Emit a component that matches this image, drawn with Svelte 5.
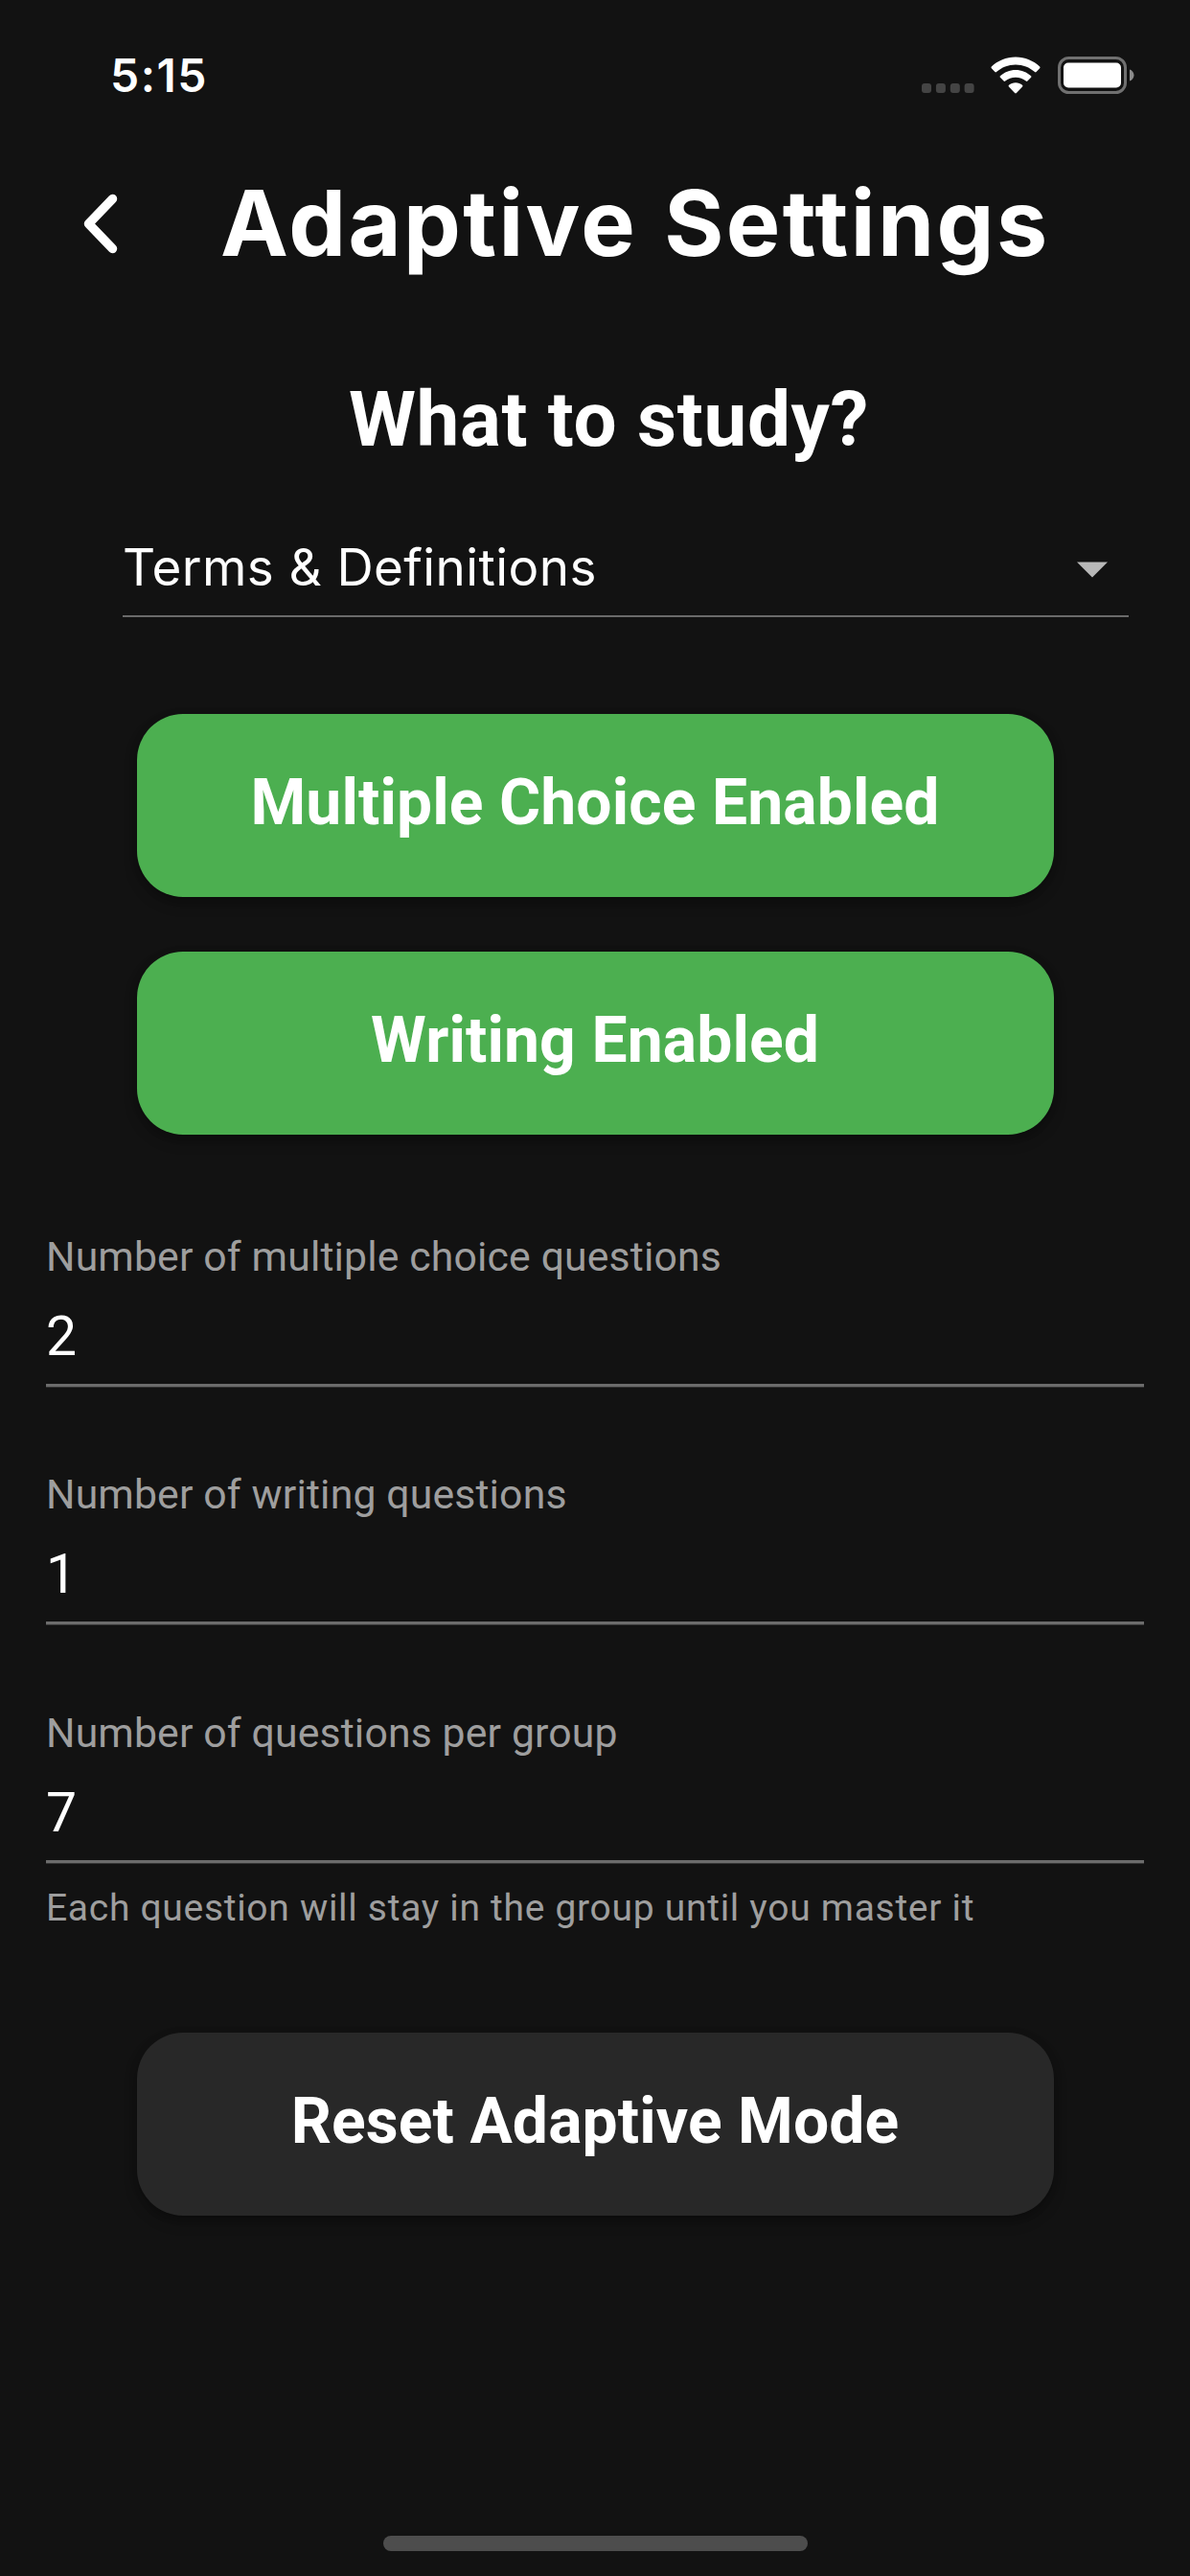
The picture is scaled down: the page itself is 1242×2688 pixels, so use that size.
<script>
  const modes = ['Multiple Choice Enabled', 'Writing Enabled'];
  const fields = [
    { label: 'Number of multiple choice questions', value: '2' },
    { label: 'Number of writing questions', value: '1' },
    {
      label: 'Number of questions per group',
      value: '7',
      hint: 'Each question will stay in the group until you master it'
    }
  ];
</script>

<div class="screen">
  <div class="status">
    <span class="time">5:15</span>
    <div class="indicators">
      <svg class="cell" width="55" height="10" viewBox="0 0 55 10" fill="#444">
        <rect x="0" width="10" height="10" rx="3" />
        <rect x="14.9" width="10" height="10" rx="3" />
        <rect x="29.8" width="10" height="10" rx="3" />
        <rect x="44.6" width="10" height="10" rx="3" />
      </svg>
      <svg class="wifi" width="52" height="39" viewBox="0 0 52 39" fill="#fff">
        <path d="M26 0.500C35.800 0.500 44.700 4.300 51.200 10.600Q52 11.400 51.200 12.200L47.600 16Q46.800 16.800 46 16C40.600 11.200 33.700 8.400 26 8.400S11.400 11.200 6 16Q5.200 16.800 4.400 16L0.800 12.200Q0 11.400 0.800 10.600C7.300 4.300 16.200 0.500 26 0.500Z" />
        <path d="M26 13.900C32.200 13.900 37.800 16.300 42.100 20.200Q42.900 21 42.100 21.800L38.400 25.500Q37.600 26.300 36.800 25.600C33.900 23.100 30.100 21.700 26 21.700S18.100 23.100 15.200 25.600Q14.400 26.300 13.600 25.500L9.900 21.800Q9.100 21 9.900 20.200C14.200 16.300 19.800 13.900 26 13.900Z" />
        <path d="M26 27.200C28.700 27.200 31.200 28.200 33 29.800Q33.900 30.600 33.100 31.400L26.900 38Q26 38.900 25.100 38L18.900 31.400Q18.100 30.600 19 29.800C20.800 28.200 23.300 27.200 26 27.200Z" />
      </svg>
      <svg class="battery" width="81" height="39" viewBox="0 0 81 39">
        <rect x="1.500" y="1.500" width="69" height="36" rx="10" fill="none" stroke="#707070" stroke-width="3" />
        <rect x="6" y="6.500" width="60" height="26" rx="5" fill="#fff" />
        <path d="M75 13.500C77.500 14.300 79.500 16.600 79.500 19.500S77.500 24.700 75 25.500Z" fill="#8a8a8a" />
      </svg>
    </div>
  </div>

  <header>
    <svg class="back" width="36" height="63" viewBox="0 0 36 63">
      <path d="M30.500 5.500L5.500 31.500L30.500 57.500" fill="none" stroke="#fff" stroke-width="9.500" stroke-linecap="round" stroke-linejoin="round" />
    </svg>
    <h1>Adaptive Settings</h1>
  </header>

  <h2>What to study?</h2>

  <div class="select">
    <span>Terms &amp; Definitions</span>
    <svg width="32" height="17" viewBox="0 0 32 17"><path d="M0 0.500H32L16 16.500Z" fill="#b8b8b8" /></svg>
  </div>

  <div class="modes">
    {#each modes as mode}
      <button class="on">{mode}</button>
    {/each}
  </div>

  <div class="fields">
    {#each fields as field}
      <div class="field">
        <div class="label">{field.label}</div>
        <div class="value">{field.value}</div>
        <div class="rule"></div>
        {#if field.hint}
          <div class="hint">{field.hint}</div>
        {/if}
      </div>
    {/each}
  </div>

  <button class="reset">Reset Adaptive Mode</button>

  <div class="home"></div>
</div>

<style>
  :global(body) {
    background: #121212;
  }
  .screen {
    box-sizing: border-box;
    width: 1242px;
    height: 2688px;
    display: flex;
    flex-direction: column;
    background: #121212;
    color: #fff;
    font-family: Roboto, sans-serif;
    overflow: hidden;
  }
  svg {
    display: block;
    flex: none;
  }
  .status {
    display: flex;
    justify-content: space-between;
    height: 123px;
    padding: 50px 57px 0 115px;
    box-sizing: border-box;
  }
  .time {
    font: 600 48px/58px Inter, sans-serif;
    letter-spacing: 1.5px;
  }
  .indicators {
    display: flex;
    align-items: flex-start;
    padding-top: 9px;
  }
  .cell {
    margin: 28px 17px 0 0;
  }
  .wifi {
    margin-right: 18px;
  }
  header {
    display: flex;
    align-items: center;
    height: 100px;
    margin-top: 60px;
    padding-left: 87px;
  }
  .back {
    margin-right: 107px;
  }
  h1 {
    margin: 0;
    font: 700 95px/100px Inter, sans-serif;
    letter-spacing: 2.4px;
    word-spacing: 3px;
    white-space: nowrap;
  }
  h2 {
    margin: 105px 0 0;
    padding-left: 29px;
    font-size: 80px;
    font-weight: 700;
    line-height: 100px;
    letter-spacing: 0.67px;
    text-align: center;
  }
  .select {
    display: flex;
    justify-content: space-between;
    align-items: center;
    margin: 74px 64px 0 128px;
    height: 60px;
    padding: 0 22px 20px 0;
    border-bottom: 2px solid #6a6a6a;
    font: 400 53px/60px Inter, sans-serif;
    letter-spacing: 0.41px;
  }
  .select svg {
    margin-top: 4px;
  }
  .modes {
    display: flex;
    flex-direction: column;
    gap: 57.3px;
    margin-top: 101px;
  }
  button {
    flex: none;
    width: 957px;
    height: 191px;
    margin: 0 auto;
    padding: 0 0 5px;
    border: 0;
    border-radius: 48px;
    color: #fff;
    font: 700 66px/76px Roboto, sans-serif;
    letter-spacing: 0.1px;
    box-shadow: 0 7px 14px rgba(0, 0, 0, 0.25), 0 2px 8px rgba(0, 0, 0, 0.15);
  }
  .on {
    background: #4caf50;
  }
  .reset {
    margin-top: 107.4px;
    background: #282828;
  }
  .fields {
    display: flex;
    flex-direction: column;
    gap: 86.4px;
    margin: 101.500px 48px 0;
  }
  .label {
    color: #9e9e9e;
    font-size: 42.75px;
    line-height: 50px;
    letter-spacing: 0.14px;
  }
  .value {
    margin-top: 26px;
    font-size: 57px;
    line-height: 66px;
  }
  .rule {
    height: 4px;
    margin-top: 16px;
    background: linear-gradient(#6c6c6c 3px, #343434 3px);
  }
  .hint {
    margin-top: 23px;
    color: #9e9e9e;
    font-size: 39px;
    line-height: 46px;
    letter-spacing: 0.7px;
  }
  .home {
    width: 443px;
    height: 16px;
    margin: auto auto 26px 400px;
    border-radius: 8px;
    background: #4d4d4d;
  }
</style>
